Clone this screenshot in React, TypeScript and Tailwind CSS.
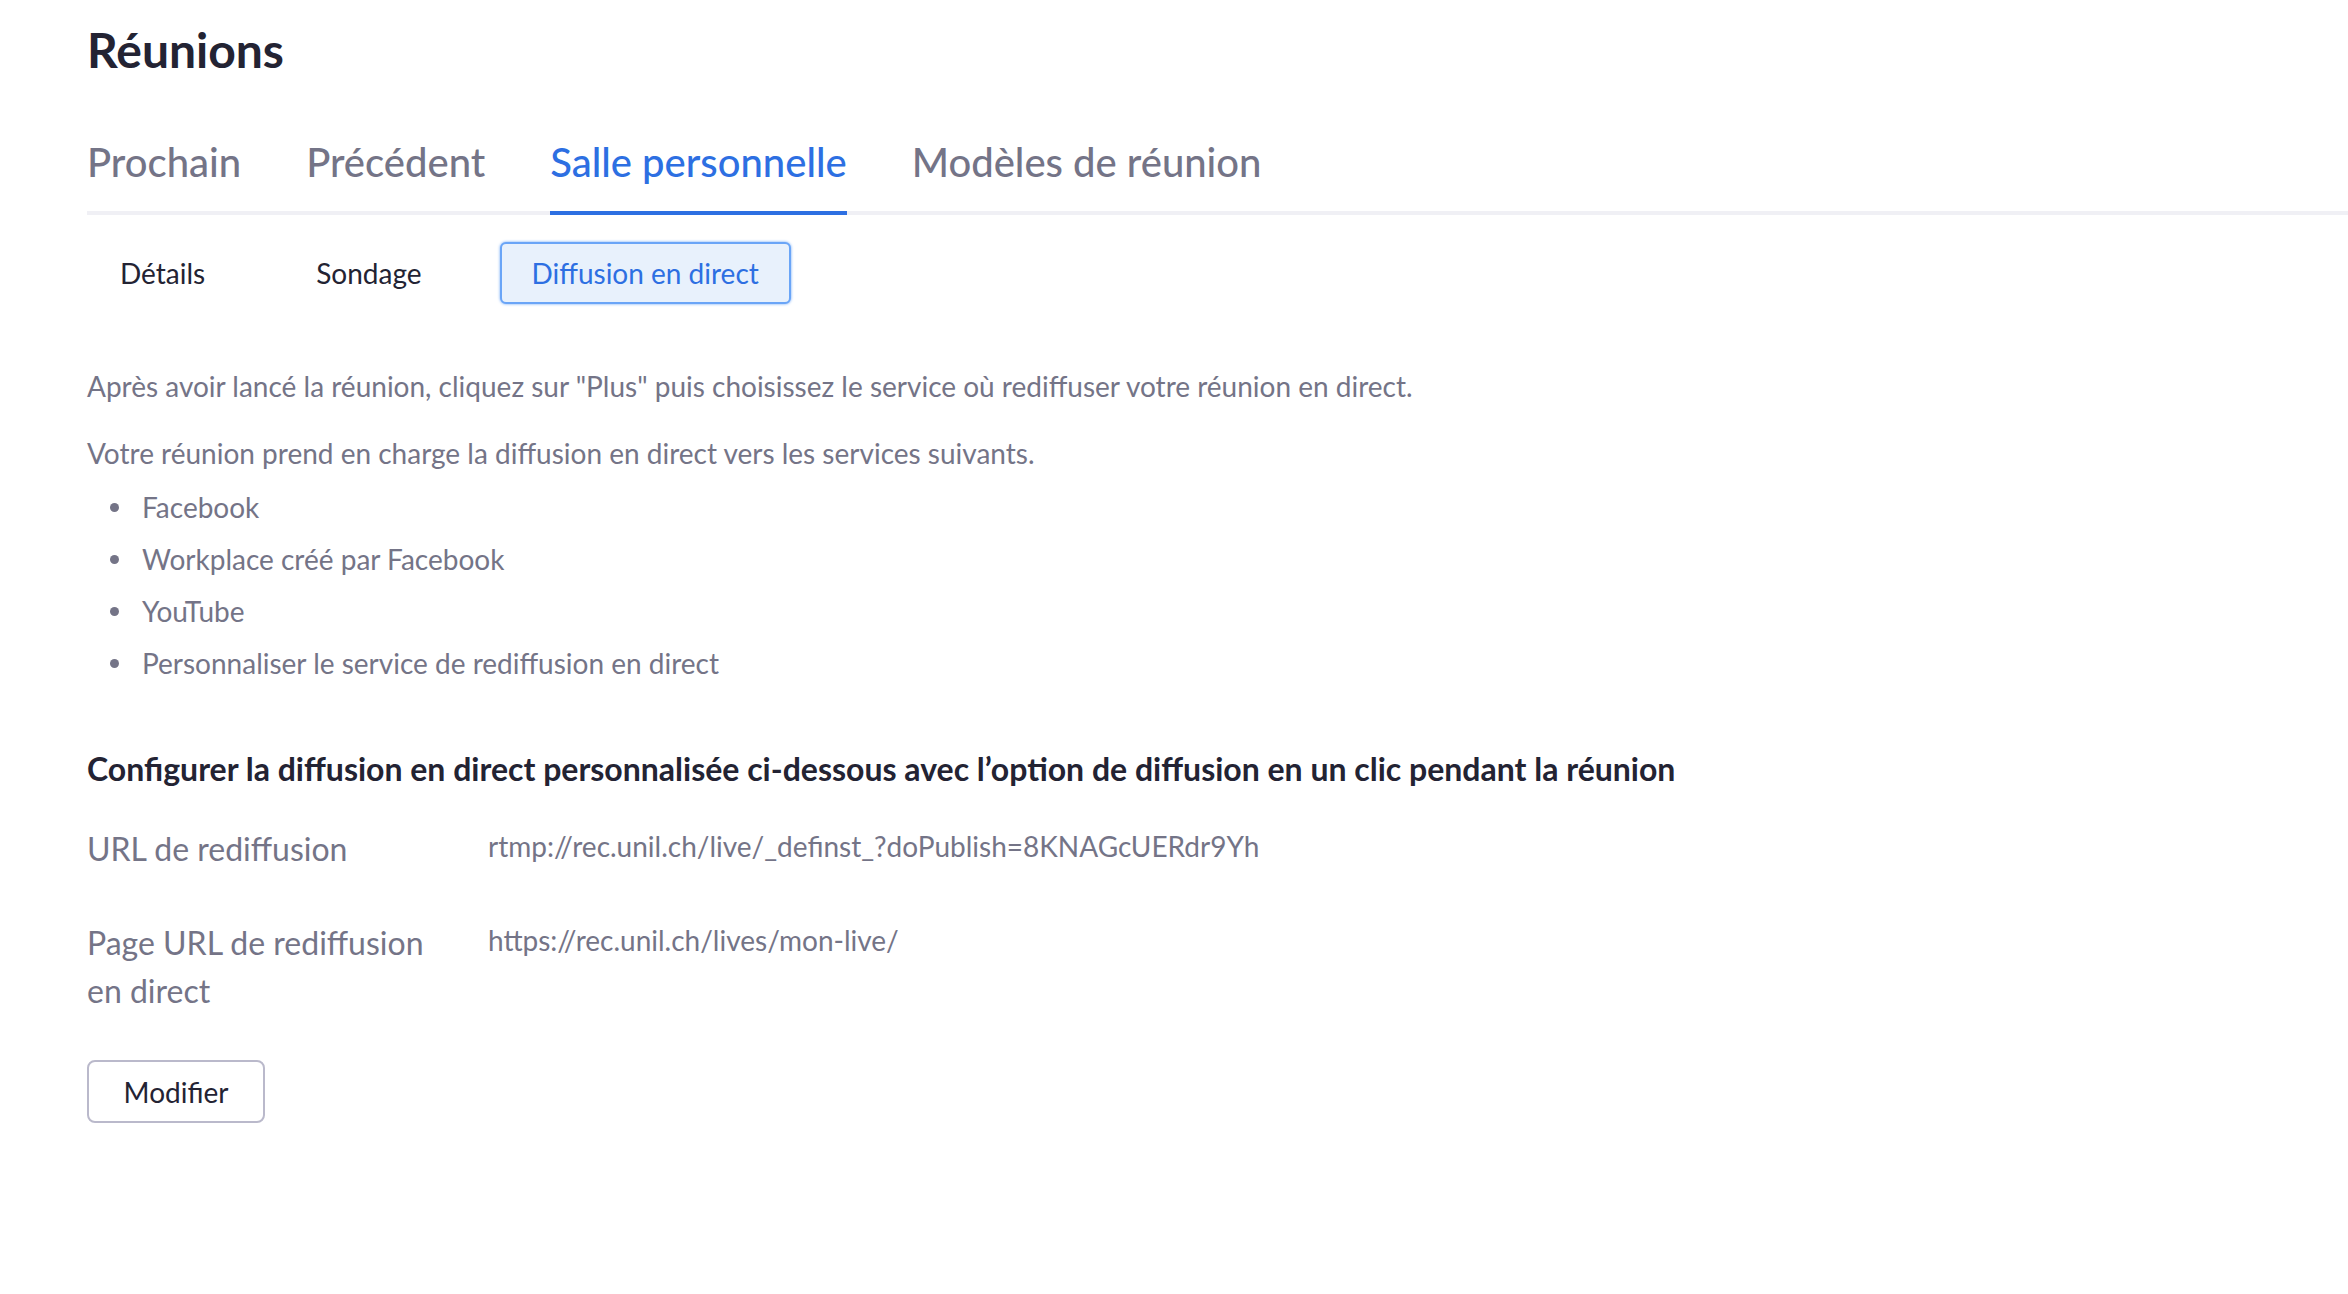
export default function App() {
  const tabs = ["Prochain", "Précédent", "Salle personnelle", "Modèles de réunion"];
  const subTabs = ["Détails", "Sondage", "Diffusion en direct"];
  const services = [
    "Facebook",
    "Workplace créé par Facebook",
    "YouTube",
    "Personnaliser le service de rediffusion en direct",
  ];

  return (
    <div className="min-h-screen bg-white pl-[87px] pt-[26px] font-['Lato','Liberation_Sans',sans-serif]">
      {/* Title */}
      <h1 className="text-[48px] font-bold leading-none text-[#232333]">Réunions</h1>

      {/* Main tabs */}
      <div className="mt-[68px] flex gap-[65px] border-b-4 border-[#f0f0f5]">
        {tabs.map((t, i) => (
          <div
            key={t}
            className={
              i === 2
                ? "-mb-1 border-b-4 border-[#2d6fe2] pb-[29px] text-[40px] font-medium leading-none text-[#2d6fe2]"
                : "-mb-1 border-b-4 border-transparent pb-[29px] text-[40px] font-medium leading-none text-[#747487]"
            }
          >
            {t}
          </div>
        ))}
      </div>

      {/* Sub tabs */}
      <div className="mt-[27px] flex gap-[45px]">
        {subTabs.map((t, i) => (
          <div
            key={t}
            className={
              i === 2
                ? "flex h-[62px] items-center rounded-[6px] border-2 border-[#6aa5f7] bg-[#e8f1fc] px-[30px] text-[28px] text-[#2d6fe2] shadow-[0_0_3px_#6aa5f7]"
                : "flex h-[62px] items-center rounded-[6px] border-2 border-transparent px-[31px] text-[28px] text-[#232333]"
            }
          >
            {t}
          </div>
        ))}
      </div>

      {/* Description */}
      <div className="mt-[56px] text-[28px] leading-[52px] text-[#747487]">
        <p>Après avoir lancé la réunion, cliquez sur "Plus" puis choisissez le service où rediffuser votre réunion en direct.</p>
        <p className="mt-[15px]">Votre réunion prend en charge la diffusion en direct vers les services suivants.</p>
        <ul className="mt-[2px]">
          {services.map((s) => (
            <li key={s} className="flex items-center gap-[23px] pl-[23px]">
              <span className="h-[9px] w-[9px] rounded-full bg-[#747487]" />
              {s}
            </li>
          ))}
        </ul>
      </div>

      {/* Custom stream config */}
      <h2 className="mt-[54px] text-[32px] font-bold leading-[52px] text-[#232333]">
        Configurer la diffusion en direct personnalisée ci-dessous avec l’option de diffusion en un clic pendant la réunion
      </h2>

      <div className="mt-[30px] flex">
        <div className="w-[360px] text-[32px] leading-[48px] text-[#747487]">URL de rediffusion</div>
        <div className="ml-[41px] text-[28px] leading-[42px] text-[#747487]">rtmp://rec.unil.ch/live/_definst_?doPublish=8KNAGcUERdr9Yh</div>
      </div>

      <div className="mt-[46px] flex">
        <div className="w-[360px] text-[32px] leading-[48px] text-[#747487]">Page URL de rediffusion en direct</div>
        <div className="ml-[41px] text-[28px] leading-[42px] text-[#747487]">https://rec.unil.ch/lives/mon-live/</div>
      </div>

      <button className="mt-[45px] flex h-[63px] w-[178px] items-center justify-center rounded-[8px] border-2 border-[#bab9cb] bg-white text-[28px] text-[#232333]">
        Modifier
      </button>
    </div>
  );
}
